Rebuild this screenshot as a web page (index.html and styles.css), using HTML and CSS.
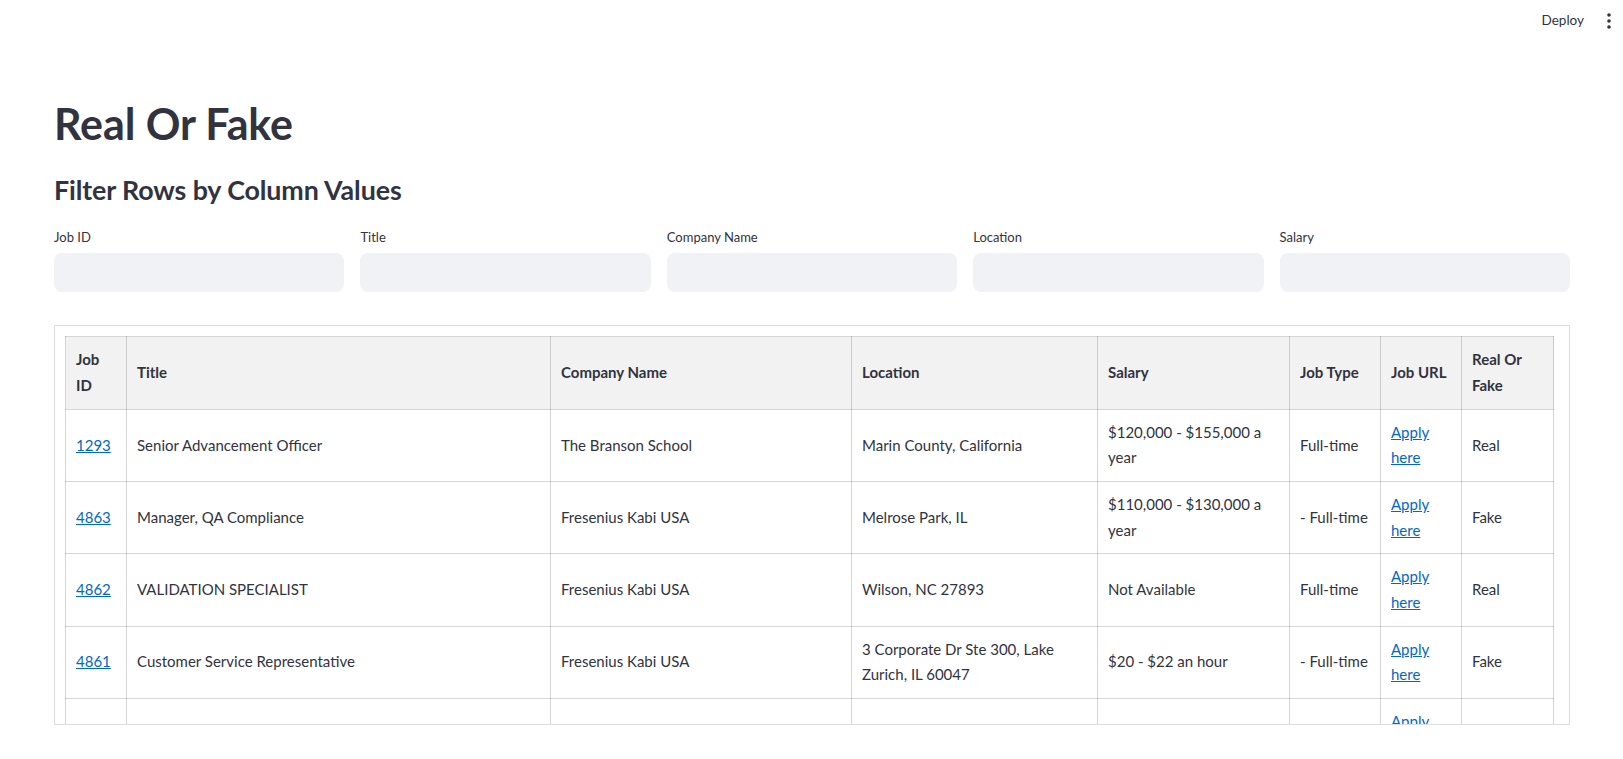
FILE: index.html
```html
<!DOCTYPE html>
<html lang="en">
<head>
<meta charset="utf-8">
<title>Real Or Fake</title>
<link rel="stylesheet" href="styles.css">
</head>
<body>
<header class="topbar">
  <button class="deploy">Deploy</button>
  <span class="kebab" aria-label="Main menu">
    <svg width="16" height="20" viewBox="0 0 16 20"><circle cx="8" cy="4" r="1.8"/><circle cx="8" cy="10" r="1.8"/><circle cx="8" cy="16" r="1.8"/></svg>
  </span>
</header>
<main class="content">
  <h1 class="title">Real Or Fake</h1>
  <h3 class="subtitle">Filter Rows by Column Values</h3>
  <div class="filters">
    <label class="field"><span class="field-label">Job ID</span><input class="field-input" type="text"></label>
    <label class="field"><span class="field-label">Title</span><input class="field-input" type="text"></label>
    <label class="field"><span class="field-label">Company Name</span><input class="field-input" type="text"></label>
    <label class="field"><span class="field-label">Location</span><input class="field-input" type="text"></label>
    <label class="field"><span class="field-label">Salary</span><input class="field-input" type="text"></label>
  </div>
  <div class="table-box">
    <table class="jobs">
      <colgroup>
        <col class="c-id"><col class="c-title"><col class="c-company"><col class="c-location"><col class="c-salary"><col class="c-type"><col class="c-url"><col class="c-real">
      </colgroup>
      <thead>
        <tr><th>Job ID</th><th>Title</th><th>Company Name</th><th>Location</th><th>Salary</th><th>Job Type</th><th>Job URL</th><th>Real Or Fake</th></tr>
      </thead>
      <tbody>
        <tr><td><a href="#">1293</a></td><td>Senior Advancement Officer</td><td>The Branson School</td><td>Marin County, California</td><td>$120,000 - $155,000 a year</td><td>Full-time</td><td><a href="#">Apply here</a></td><td>Real</td></tr>
        <tr><td><a href="#">4863</a></td><td>Manager, QA Compliance</td><td>Fresenius Kabi USA</td><td>Melrose Park, IL</td><td>$110,000 - $130,000 a year</td><td>- Full-time</td><td><a href="#">Apply here</a></td><td>Fake</td></tr>
        <tr><td><a href="#">4862</a></td><td>VALIDATION SPECIALIST</td><td>Fresenius Kabi USA</td><td>Wilson, NC 27893</td><td>Not Available</td><td>Full-time</td><td><a href="#">Apply here</a></td><td>Real</td></tr>
        <tr><td><a href="#">4861</a></td><td>Customer Service Representative</td><td>Fresenius Kabi USA</td><td>3 Corporate Dr Ste 300, Lake Zurich, IL 60047</td><td>$20 - $22 an hour</td><td>- Full-time</td><td><a href="#">Apply here</a></td><td>Fake</td></tr>
        <tr><td></td><td></td><td></td><td></td><td></td><td></td><td><a href="#">Apply here</a></td><td></td></tr>
      </tbody>
    </table>
  </div>
</main>
</body>
</html>
```
FILE: styles.css
```css
* { box-sizing: border-box; }
html, body { margin: 0; padding: 0; background: #ffffff; }
body {
  font-family: Lato, "Noto Sans", sans-serif;
  color: #31333f;
  width: 1623px;
  height: 759px;
  overflow: hidden;
}
.topbar {
  height: 40px;
  display: flex;
  justify-content: flex-end;
  align-items: center;
  padding-right: 6px;
}
.deploy {
  font-family: Lato, "Noto Sans", sans-serif;
  font-size: 13.5px;
  color: #31333f;
  background: none;
  border: none;
  padding: 0;
  margin-right: 17px;
  margin-top: -1px;
}
.kebab { display: flex; margin-top: 1px; }
.kebab svg { fill: #31333f; }
.content {
  padding: 0 53px 0 54px;
}
.title {
  margin: 0;
  padding-top: 58px;
  font-size: 43px;
  line-height: 52.8px;
  font-weight: 700;
  letter-spacing: -0.1px;
}
.subtitle {
  margin: 23px 0 0;
  font-size: 26.8px;
  line-height: 33.6px;
  font-weight: 700;
  letter-spacing: -0.1px;
}
.filters {
  margin-top: 19px;
  display: grid;
  grid-template-columns: repeat(5, 1fr);
  gap: 16px;
}
.field { display: flex; flex-direction: column; }
.field-label {
  font-size: 13px;
  line-height: 22px;
  height: 22px;
  margin-bottom: 5px;
}
.field-input {
  height: 39px;
  border: none;
  border-radius: 8px;
  background: #f0f2f6;
  outline: none;
}
.table-box {
  margin-top: 33px;
  height: 400px;
  border: 1px solid rgba(49, 51, 63, 0.17);
  padding: 10px 0 0 10px;
  overflow: hidden;
}
.jobs {
  border-collapse: collapse;
  table-layout: fixed;
  width: 1488px;
  font-size: 15px;
  line-height: 25.6px;
}
.c-id { width: 61px; }
.c-title { width: 424px; }
.c-company { width: 301px; }
.c-location { width: 246px; }
.c-salary { width: 192px; }
.c-type { width: 91px; }
.c-url { width: 81px; }
.c-real { width: 92px; }
.jobs th, .jobs td {
  border: 1px solid rgba(49, 51, 63, 0.2);
  padding: 10px;
  text-align: left;
  vertical-align: middle;
  height: 72.3px;
}
.jobs th {
  background: #f2f2f2;
  font-weight: 700;
}
.jobs a { color: #0068c9; text-decoration: underline; }
```
